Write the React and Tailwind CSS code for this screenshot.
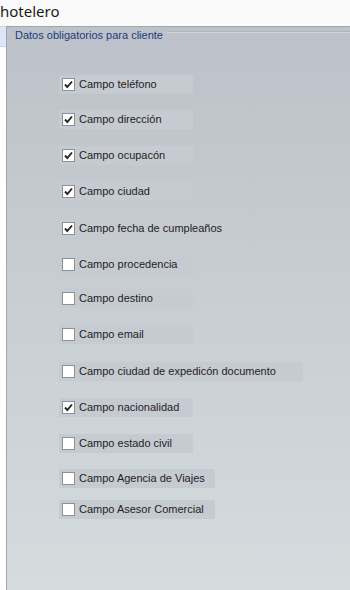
import React from 'react';

const fields = [
  { label: 'Campo teléfono', checked: true, w: 'w-[134px]', mt: 'mt-0' },
  { label: 'Campo dirección', checked: true, w: 'w-[134px]', mt: 'mt-[16px]' },
  { label: 'Campo ocupacón', checked: true, w: 'w-[134px]', mt: 'mt-[17px]' },
  { label: 'Campo ciudad', checked: true, w: 'w-[134px]', mt: 'mt-[17px]' },
  { label: 'Campo fecha de cumpleaños', checked: true, w: 'w-[196px]', mt: 'mt-[18px]' },
  { label: 'Campo procedencia', checked: false, w: 'w-[134px]', mt: 'mt-[17px]' },
  { label: 'Campo destino', checked: false, w: 'w-[134px]', mt: 'mt-[15px]' },
  { label: 'Campo email', checked: false, w: 'w-[134px]', mt: 'mt-[17px]' },
  { label: 'Campo ciudad de expedicón documento', checked: false, w: 'w-[244px]', mt: 'mt-[18px]' },
  { label: 'Campo nacionalidad', checked: true, w: 'w-[134px]', mt: 'mt-[17px]' },
  { label: 'Campo estado civil', checked: false, w: 'w-[134px]', mt: 'mt-[17px]' },
  { label: 'Campo Agencia de Viajes', checked: false, w: 'w-[156px]', mt: 'mt-[16px]' },
  { label: 'Campo Asesor Comercial', checked: false, w: 'w-[156px]', mt: 'mt-[12px]' },
];

function CheckBox({ checked }) {
  return (
    <div className="w-[13px] h-[13px] bg-white border border-[#8e9094] flex items-center justify-center shrink-0">
      {checked && (
        <svg width="11" height="11" viewBox="0 0 11 11">
          <path d="M2 5.5 L4.3 8 L9 2.5" fill="none" stroke="#262626" strokeWidth="1.9" />
        </svg>
      )}
    </div>
  );
}

export default function App() {
  return (
    <div className="w-[350px] h-[590px] bg-white flex flex-col overflow-hidden" style={{ fontFamily: '"Liberation Sans", Arial, sans-serif' }}>
      {/* Window title */}
      <div className="h-[26px] bg-[#fafafa] flex items-center pl-0">
        <span className="text-[15px] text-[#1a1a1a] leading-none -mt-[3px]" style={{ fontFamily: '"Noto Sans", "Open Sans", sans-serif' }}>hotelero</span>
      </div>

      <div className="flex flex-1 min-h-0">
        {/* left strip */}
        <div className="w-[6px] flex flex-col border-t border-[#d6d6d6]">
          <div className="h-[20px] bg-[#dbe7f8] border-b border-[#c4d6ee]"></div>
          <div className="flex-1 bg-white"></div>
        </div>

        {/* Panel */}
        <div className="flex-1 border-l border-t border-[#a3a5a9] bg-gradient-to-b from-[#bdc1c9] to-[#d4dcde] flex flex-col">
          {/* group title */}
          <div className="flex items-center h-[16px]">
            <span className="pl-[8px] pr-[4px] text-[11px] text-[#1b3d78] whitespace-nowrap leading-none">Datos obligatorios para cliente</span>
            <div className="flex-1 flex flex-col mt-[-6px]">
              <div className="h-px bg-[#b1b5bc]"></div>
              <div className="h-px bg-[#d3d6db]"></div>
            </div>
          </div>

          <div className="flex flex-col pl-[52px] pt-[32px]">
            {fields.map((f) => (
              <div key={f.label} className={`${f.mt} ${f.w} h-[19px] bg-[#c6cad1] flex items-center pl-[3px] gap-[4px]`}>
                <CheckBox checked={f.checked} />
                <span className="text-[11px] text-[#1e1e1e] whitespace-nowrap leading-none">{f.label}</span>
              </div>
            ))}
          </div>
        </div>
      </div>
    </div>
  );
}
